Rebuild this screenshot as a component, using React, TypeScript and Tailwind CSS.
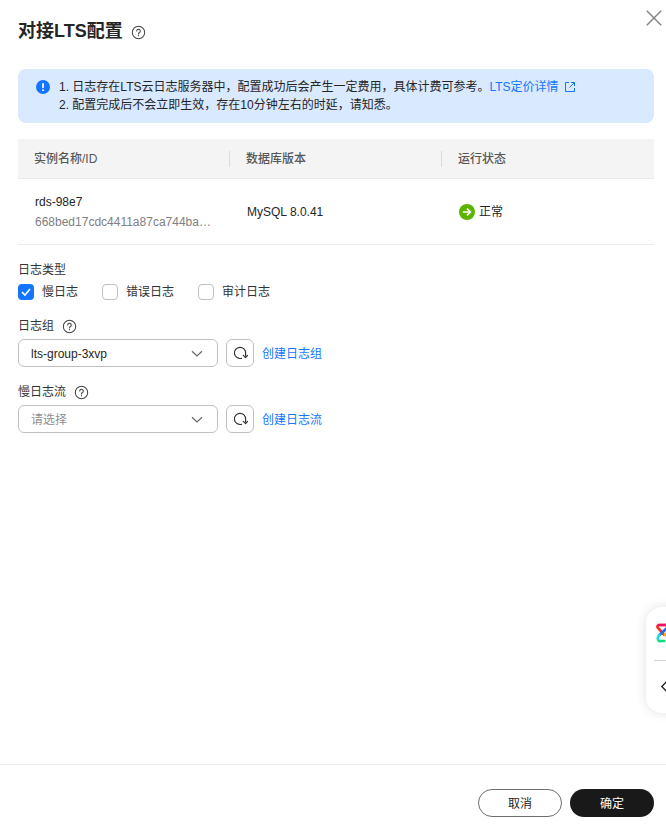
const Help = ({ className = "" }: { className?: string }) => (
  <svg viewBox="0 0 16 16" className={"w-[15px] h-[15px] " + className} fill="none" stroke="#444" strokeWidth="1.1">
    <circle cx="8" cy="8" r="6.6" />
    <path d="M6.1 6.4a1.9 1.9 0 1 1 2.9 1.6c-.7.4-1 .8-1 1.5" strokeLinecap="round" />
    <circle cx="8" cy="11.4" r=".7" fill="#444" stroke="none" />
  </svg>
);

const Chevron = () => (
  <svg viewBox="0 0 12 8" className="w-[12px] h-[8px] mt-[1px]" fill="none" stroke="#666" strokeWidth="1.2">
    <path d="M1 1.2 6 6l5-4.8" />
  </svg>
);

const Refresh = () => (
  <button className="w-[28px] h-[28px] border border-[#c0c0c0] rounded-[6px] flex items-center justify-center bg-white">
    <svg viewBox="0 0 16 16" className="w-[16px] h-[16px]" fill="none" stroke="#333" strokeWidth="1.2">
      <path d="M9.5 13.3A5.6 5.6 0 1 1 13.6 8.2v3" strokeLinecap="round" />
      <path d="M11.3 10.4 13.6 12.6 15.6 10.4" strokeLinejoin="round" strokeLinecap="round" />
    </svg>
  </button>
);

const Check = ({ label, checked, w }: { label: string; checked?: boolean; w: string }) => (
  <div className={"flex items-center gap-[8px] " + w}>
    {checked ? (
      <span className="w-[16px] h-[16px] rounded-[4px] bg-[#1476ff] flex items-center justify-center">
        <svg viewBox="0 0 12 12" className="w-[12px] h-[12px]" fill="none" stroke="#fff" strokeWidth="1.6">
          <path d="M2 6.2 5 9l5-6" />
        </svg>
      </span>
    ) : (
      <span className="w-[16px] h-[16px] rounded-[4px] border border-[#c0c0c0] bg-white" />
    )}
    <span className="text-[12px] text-[#333]">{label}</span>
  </div>
);

const SelectRow = ({ value, placeholder, link }: { value: string; placeholder?: boolean; link: string }) => (
  <div className="flex items-center h-[28px]">
    <div className="w-[200px] h-[28px] border border-[#c0c0c0] rounded-[6px] flex items-center justify-between pl-[12px] pr-[14px] bg-white">
      <span className={"text-[12px] pt-[1px] " + (placeholder ? "text-[#8f8f8f]" : "text-[#252525]")}>{value}</span>
      <Chevron />
    </div>
    <div className="ml-[8px]"><Refresh /></div>
    <span className="ml-[8px] pt-[1px] text-[12px] text-[#1476ff]">{link}</span>
  </div>
);

export default function App() {
  return (
    <div
      className="relative w-[666px] h-[825px] overflow-hidden bg-white flex flex-col"
      style={{ fontFamily: '"Liberation Sans", "Noto Sans CJK SC", sans-serif' }}
    >
      <button className="absolute left-[646px] top-[10px]" aria-label="close">
        <svg viewBox="0 0 16 16" className="w-[16px] h-[16px]" fill="none" stroke="#808080" strokeWidth="1.4">
          <path d="M.8.8l14.4 14.4M15.2.8.8 15.2" />
        </svg>
      </button>

      <div className="flex-1 pl-[18px] pr-[12px] pt-[19px]">
        <div className="flex items-center h-[24px]">
          <h1 className="text-[18px] leading-[24px] font-bold text-[#252525]">对接LTS配置</h1>
          <Help className="ml-[8px] mt-[2px]" />
        </div>

        <div className="mt-[26px] h-[54px] bg-[#d9e9ff] rounded-[8px] flex pl-[18px] pt-[9px] text-[12px] leading-[18px] text-[#252525]">
          <svg viewBox="0 0 16 16" className="w-[14px] h-[14px] mt-[2px] shrink-0">
            <circle cx="8" cy="8" r="8" fill="#1476ff" />
            <rect x="7" y="3.4" width="2" height="6" rx="1" fill="#fff" />
            <circle cx="8" cy="11.6" r="1.1" fill="#fff" />
          </svg>
          <div className="ml-[9px]">
            <div className="flex items-center">
              <span>1. 日志存在LTS云日志服务器中，配置成功后会产生一定费用，具体计费可参考。</span>
              <span className="text-[#1476ff]">LTS定价详情</span>
              <svg viewBox="0 0 12 12" className="w-[12px] h-[12px] ml-[5px]" fill="none" stroke="#1476ff" strokeWidth="1">
                <path d="M5 1.5H1.5v9h9V7M7 1.5h3.5V5M10.5 1.5 5.5 6.5" />
              </svg>
            </div>
            <div>2. 配置完成后不会立即生效，存在10分钟左右的时延，请知悉。</div>
          </div>
        </div>

        <div className="mt-[16px] h-[40px] bg-[#f4f4f4] border-b border-[#ebebeb] grid grid-cols-[211px_212px_1fr] items-center text-[12px] font-medium text-[#575757]">
          <div className="pl-[16px]">实例名称/ID</div>
          <div className="pl-[16px] border-l border-[#dcdcdc] h-[16px] leading-[16px]">数据库版本</div>
          <div className="pl-[16px] border-l border-[#dcdcdc] h-[16px] leading-[16px]">运行状态</div>
        </div>
        <div className="h-[66px] border-b border-[#ebebeb] grid grid-cols-[211px_212px_1fr] items-center text-[12px] text-[#252525]">
          <div className="pl-[17px]">
            <div className="leading-[18px]">rds-98e7</div>
            <div className="leading-[18px] mt-[2px] text-[#808080] whitespace-nowrap">668bed17cdc4411a87ca744ba…</div>
          </div>
          <div className="pl-[18px]">MySQL 8.0.41</div>
          <div className="pl-[18px] flex items-center">
            <svg viewBox="0 0 16 16" className="w-[16px] h-[16px]" fill="none">
              <circle cx="8" cy="8" r="8" fill="#5cb300" />
              <path d="M3.8 8h7.6M8 4.6 11.4 8 8 11.4" stroke="#fff" strokeWidth="1.6" />
            </svg>
            <span className="ml-[4px]">正常</span>
          </div>
        </div>

        <div className="mt-[16px] text-[12px] leading-[18px] text-[#333]">日志类型</div>
        <div className="mt-[5px] flex items-center h-[16px]">
          <Check label="慢日志" checked w="w-[84px]" />
          <Check label="错误日志" w="w-[96px]" />
          <Check label="审计日志" w="w-[96px]" />
        </div>

        <div className="mt-[17px] flex items-center h-[18px] text-[12px] text-[#333]">
          日志组<Help className="ml-[8px]" />
        </div>
        <div className="mt-[4px]"><SelectRow value="lts-group-3xvp" link="创建日志组" /></div>

        <div className="mt-[16px] flex items-center h-[18px] text-[12px] text-[#333]">
          慢日志流<Help className="ml-[8px]" />
        </div>
        <div className="mt-[4px]"><SelectRow value="请选择" placeholder link="创建日志流" /></div>
      </div>

      <div className="h-[61px] border-t border-[#ebebeb] flex justify-end gap-[8px] pt-[24px] pr-[12px]">
        <button className="w-[84px] h-[28px] rounded-full border border-[#6e6e6e] bg-white text-[12px] text-[#252525] pt-[1px]">取消</button>
        <button className="w-[84px] h-[28px] rounded-full bg-[#191919] text-[12px] text-white pt-[1px]">确定</button>
      </div>

      <div className="absolute left-[646px] top-[607px] w-[40px] h-[106px] bg-white rounded-l-[16px] shadow-[0_0_12px_rgba(0,0,0,0.12)]">
        <svg viewBox="0 0 20 20" className="absolute left-[10px] top-[16px] w-[20px] h-[20px]" fill="none" strokeWidth="2.6" strokeLinecap="round">
          <path d="M8 11.5 1.6 4.5C1 3.4 1.6 2 3 2h11" stroke="#f3301c" />
          <path d="M3 2h11" stroke="#e8126c" />
          <path d="M12 4 3.5 12" stroke="#2767f0" />
          <path d="M3.5 12C1.5 13.5 1 16.5 3 18" stroke="#10e0e0" />
          <path d="M3 18h5" stroke="#0adf7a" />
          <path d="M9 11c2 2 3 4 2 7" stroke="#f2b600" />
        </svg>
        <div className="absolute left-[8px] top-[53px] w-[32px] h-px bg-[#d4d4d4]" />
        <svg viewBox="0 0 10 14" className="absolute left-[14px] top-[73px] w-[9px] h-[13px]" fill="none" stroke="#222" strokeWidth="1.5">
          <path d="M8 1 2 7l6 6" />
        </svg>
      </div>
    </div>
  );
}
